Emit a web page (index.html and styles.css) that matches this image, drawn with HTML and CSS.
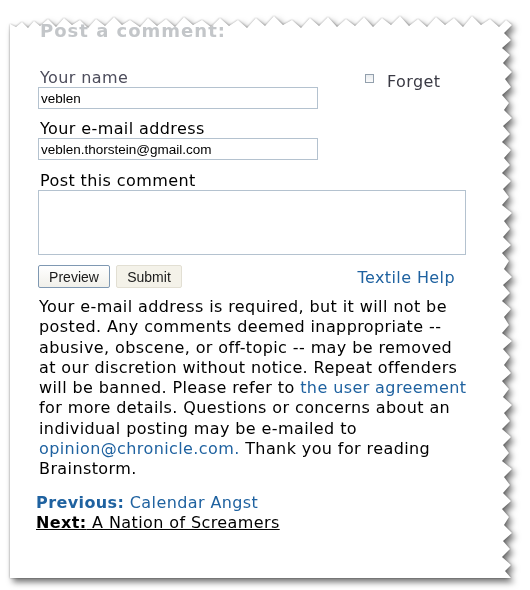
FILE: index.html
```html
<!DOCTYPE html>
<html>
<head>
<meta charset="utf-8">
<link rel="stylesheet" href="styles.css">
</head>
<body>
<div class="shadow">
  <div class="paper">
    <h3 class="title">Post a comment:</h3>
    <form class="form">
      <div class="name-row">
        <div class="field">
          <label class="label label-muted">Your name</label>
          <input class="text" type="text" value="veblen">
        </div>
        <label class="forget"><span class="check"></span>Forget</label>
      </div>
      <label class="label label-gap">Your e-mail address</label>
      <input class="text" type="text" value="veblen.thorstein@gmail.com">
      <label class="label label-gap2">Post this comment</label>
      <textarea class="area"></textarea>
      <div class="actions">
        <button type="button" class="btn btn-preview">Preview</button>
        <button type="button" class="btn btn-submit">Submit</button>
        <a class="link help">Textile Help</a>
      </div>
    </form>
    <p class="notice">Your e-mail address is required, but it will not be posted. Any comments deemed inappropriate -- abusive, obscene, or off-topic -- may be removed at our discretion without notice. Repeat offenders will be banned. Please refer to <a class="link">the user agreement</a> for more details. Questions or concerns about an individual posting may be e-mailed to <a class="link">opinion@chronicle.com.</a> Thank you for reading Brainstorm.</p>
    <div class="nav">
      <div class="prev"><b class="link">Previous:</b> <a class="link">Calendar Angst</a></div>
      <div class="next"><a class="next-link"><b>Next:</b> A Nation of Screamers</a></div>
    </div>
  </div>
</div>
</body>
</html>
```
FILE: styles.css
```css
html, body {
  margin: 0;
  padding: 0;
  background: #ffffff;
}
body {
  font-family: "DejaVu Sans", Verdana, sans-serif;
  font-size: 16px;
  letter-spacing: 0.4px;
  color: #000;
}
.shadow {
  padding: 15px 0 12px 10px;
  filter: drop-shadow(0 0 1px rgba(0,0,0,0.35)) drop-shadow(3px 4px 3px rgba(0,0,0,0.55));
}
.paper {
  width: 503px;
  height: 563px;
  box-sizing: border-box;
  background: #fff;
  padding: 5px 0 0 28px;
  clip-path: polygon(0px 9px, 6px 12px, 12px 7px, 18px 13px, 24px 6px, 30px 11px, 38px 4px, 46px 12px, 54px 3px, 62px 10px, 70px 5px, 78px 13px, 86px 4px, 95px 11px, 104px 2px, 112px 10px, 120px 5px, 130px 12px, 138px 3px, 147px 11px, 156px 4px, 165px 12px, 174px 2px, 183px 10px, 192px 5px, 201px 12px, 210px 3px, 219px 11px, 228px 5px, 237px 13px, 246px 3px, 255px 11px, 264px 1px, 273px 10px, 282px 5px, 291px 13px, 300px 3px, 309px 11px, 318px 2px, 327px 12px, 336px 4px, 345px 11px, 354px 2px, 363px 12px, 372px 3px, 381px 10px, 390px 1px, 399px 11px, 408px 4px, 417px 12px, 426px 2px, 435px 10px, 444px 3px, 453px 12px, 462px 1px, 471px 10px, 480px 4px, 489px 12px, 496px 5px,
    502px 10px, 494px 18px, 501px 25px, 492px 33px, 500px 40px, 493px 48px, 502px 57px, 495px 64px, 501px 72px, 492px 80px, 499px 88px, 494px 95px, 502px 103px, 493px 111px, 500px 119px, 492px 127px, 501px 135px, 494px 143px, 500px 150px, 492px 158px, 501px 166px, 493px 174px, 499px 182px, 492px 190px, 502px 198px, 494px 206px, 500px 214px, 493px 222px, 501px 230px, 492px 238px, 499px 246px, 494px 254px, 502px 262px, 493px 270px, 500px 278px, 492px 286px, 501px 294px, 494px 302px, 499px 310px, 492px 318px, 502px 326px, 493px 334px, 500px 342px, 494px 350px, 501px 358px, 492px 366px, 499px 374px, 493px 382px, 502px 390px, 494px 398px, 500px 406px, 492px 414px, 501px 422px, 493px 430px, 499px 438px, 492px 446px, 502px 454px, 494px 462px, 500px 470px, 493px 478px, 501px 486px, 492px 494px, 499px 502px, 494px 510px, 502px 518px, 493px 526px, 500px 534px, 492px 542px, 501px 550px, 495px 556px, 501px 563px, 0px 563px);
}
.title {
  margin: 0;
  font-size: 18px;
  line-height: 22px;
  font-weight: bold;
  letter-spacing: 1px;
  color: #c3c6c9;
  padding-left: 2px;
}
.form {
  margin: 0;
  padding-top: 26px;
  display: flex;
  flex-direction: column;
  align-items: flex-start;
}
.name-row {
  display: flex;
  align-items: flex-start;
}
.field {
  display: flex;
  flex-direction: column;
  align-items: flex-start;
}
.label {
  display: block;
  line-height: 19px;
  padding-left: 2px;
}
.label-muted {
  color: #4d4d5c;
}
.label-gap { margin-top: 10px; }
.label-gap2 { margin-top: 11px; }
.text {
  box-sizing: border-box;
  width: 280px;
  height: 22px;
  margin: 0;
  border: 1px solid #b4c2cf;
  padding: 0 2px;
  font-family: "Liberation Sans", Arial, sans-serif;
  font-size: 13.5px;
  letter-spacing: 0;
  color: #000;
  background: #fff;
}
.forget {
  display: flex;
  align-items: center;
  margin-left: 47px;
  margin-top: 4px;
  color: #3a3a44;
  line-height: 19px;
}
.check {
  display: inline-block;
  width: 7px;
  height: 7px;
  border: 1px solid #93a0ad;
  background: linear-gradient(#e9ecef, #fbfbfb);
  margin-right: 13px;
  margin-top: -6px;
}
.area {
  box-sizing: border-box;
  width: 428px;
  height: 65px;
  margin: 0;
  border: 1px solid #b4c2cf;
  resize: none;
  background: #fff;
}
.actions {
  display: flex;
  align-items: center;
  width: 428px;
  margin-top: 10px;
}
.btn {
  box-sizing: border-box;
  height: 23px;
  margin: 0;
  padding: 0;
  font-family: "Liberation Sans", Arial, sans-serif;
  font-size: 14px;
  letter-spacing: 0;
  color: #1a1a1a;
  border-radius: 2px;
}
.btn-preview {
  width: 72px;
  border: 1px solid #7f98b2;
  background: linear-gradient(#ffffff, #f1f0ea);
}
.btn-submit {
  width: 66px;
  margin-left: 6px;
  border: 1px solid #e2dfd3;
  background: #f4f2e9;
}
.link {
  color: #1f62a0;
  text-decoration: none;
}
.help {
  margin-left: auto;
  margin-right: 11px;
  margin-top: 2px;
}
.notice {
  width: 432px;
  margin: 9px 0 0 0;
  line-height: 20.25px;
  padding-left: 1px;
}
.nav {
  margin-top: 14px;
  margin-left: -2px;
  line-height: 20px;
}
.prev b { font-weight: bold; }
.next-link {
  color: #000;
  text-decoration: underline;
}
```
